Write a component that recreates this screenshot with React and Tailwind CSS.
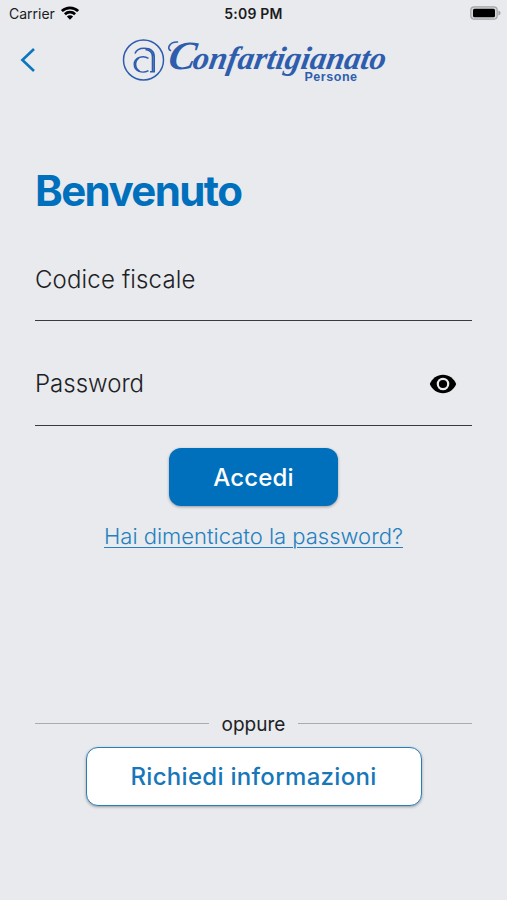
import { useState } from "react";

const StatusBar = () => (
  <div className="grid h-7 grid-cols-3 items-center text-sm text-[#1b1b1d]">
    <div className="flex items-center gap-1.5 pl-[9px]">
      <span>Carrier</span>
      <svg viewBox="0 0 18 14" className="-mt-0.5 h-3.5 w-[18px]" fill="none" stroke="#000" strokeWidth="2.7">
        <path d="M0.9 5.1 A11.6 11.6 0 0 1 17.1 5.1" />
        <path d="M3.9 8.3 A7.3 7.3 0 0 1 14.1 8.3" />
        <path d="M9 13.7 L5.9 10.6 A4.4 4.4 0 0 1 12.1 10.6 Z" fill="#000" stroke="none" />
      </svg>
    </div>
    <span className="text-center font-semibold tracking-[0.2px]">5:09 PM</span>
    <svg viewBox="0 0 31 14" className="mr-[6px] -mt-0.5 h-3.5 w-[31px] justify-self-end">
      <rect x="0.8" y="0.8" width="26.4" height="12.4" rx="3.5" fill="#d5d6d8" stroke="#a3a4a6" strokeWidth="1.2" />
      <rect x="3" y="2.7" width="22" height="8.6" rx="1.6" fill="#000" />
      <path d="M28.4 4.6 Q30.6 5.4 30.6 7 Q30.6 8.6 28.4 9.4 Z" fill="#a3a4a6" />
    </svg>
  </div>
);

const Logo = () => (
  <svg viewBox="0 0 270 48" className="h-12 w-[270px] overflow-visible" fill="#2f5dae" role="img" aria-label="Confartigianato Persone">
    <g fill="none" stroke="#2f5dae">
      <circle cx="22.5" cy="24" r="20" strokeWidth="1.5" />
      <path d="M14 17.5 C15.5 13.5 19 12.3 23 12.3 C29.5 12.3 33.2 15.5 33.2 21 V35.8 H29" strokeWidth="1.6" />
      <path d="M24.5 13.4 C29 14 31.6 16.5 31.6 21 V35.8" strokeWidth="1.8" />
      <path d="M27.5 22.3 C22 18.8 13.2 21.5 13.2 28.2 C13.2 35.5 21.5 38 27.5 34.6" strokeWidth="1.4" />
      <path d="M18 21.8 C13.2 25 13.2 32 18.5 35.2" strokeWidth="1.8" />
    </g>
    <g fontFamily="'Liberation Serif', serif" fontWeight="700" fontStyle="italic" transform="translate(0 32.6) skewX(-10)">
      <text x="46" y="0" fontSize="40" textLength="27" lengthAdjust="spacingAndGlyphs">C</text>
      <text x="70.5" y="0" fontSize="32.5" textLength="193" lengthAdjust="spacingAndGlyphs">onfartigianato</text>
    </g>
    <path d="M49.5 14.5 C45.5 13 48.5 5.5 56.500 6" fill="none" stroke="#2f5dae" strokeWidth="1.6" strokeLinecap="round" />
    <text x="183.5" y="44.5" fontSize="12.5" fontWeight="700" fontFamily="'Liberation Sans', sans-serif" textLength="52.5">Persone</text>
  </svg>
);

const EyeIcon = () => (
  <svg viewBox="0 0 28 20" className="h-5 w-7">
    <path d="M14 0.7 C8 0.7 3 4.5 0.8 10 C3 15.5 8 19.3 14 19.3 S25 15.5 27.2 10 C25 4.5 20 0.7 14 0.7 Z" fill="#000" />
    <circle cx="14" cy="10" r="5.2" fill="#000" stroke="#e8eaed" strokeWidth="2.2" />
  </svg>
);

const App = () => {
  const [showPassword, setShowPassword] = useState(false);

  return (
    <div className="flex h-screen flex-col overflow-hidden bg-[#e8eaed] font-['Inter',sans-serif] text-[#202124]">
      <StatusBar />

      <header className="grid h-16 grid-cols-[121px_270px_1fr] items-center">
        <button type="button" aria-label="Indietro" className="pl-5">
          <svg viewBox="0 0 16 26" className="h-[26px] w-4" fill="none" stroke="#0b76be" strokeWidth="2.6">
            <path d="M14 2 L2.4 13 L14 24" />
          </svg>
        </button>
        <Logo />
      </header>

      <main className="flex flex-col px-[35px] pt-[73px]">
        <h1 className="text-[42px] leading-[52px] font-bold tracking-[-1.6px] text-[#0070bd]">Benvenuto</h1>

        <div className="mt-9 flex h-[68px] items-start border-b border-[#3a3b3e] pt-[11px] text-2xl leading-8 font-light tracking-[0.15px]">
          <span>Codice fiscale</span>
        </div>

        <div className="mt-9 flex h-[69px] items-start justify-between border-b border-[#3a3b3e] pt-[11px] pr-[15px] text-2xl leading-8 font-light">
          <span>Password</span>
          <button type="button" aria-label="Mostra password" className="mt-1.5" onClick={() => setShowPassword(!showPassword)}>
            <EyeIcon />
          </button>
        </div>

        <button
          type="button"
          className="mt-[22px] h-[58px] w-[169px] self-center rounded-xl bg-[#0070bd] pt-0.5 text-2xl font-medium tracking-[0.2px] text-white shadow-[0_1px_3px_rgba(0,0,0,0.35)]"
        >
          Accedi
        </button>
        <a href="#" className="mt-3.5 self-center text-[22px] leading-8 font-light text-[#2580c0] underline decoration-1 underline-offset-3">
          Hai dimenticato la password?
        </a>

        <div className="mt-[155px] flex items-center gap-[13px] text-[19px] leading-7">
          <div className="h-px flex-1 bg-[#aaabae]" />
          <span className="pt-1">oppure</span>
          <div className="h-px flex-1 bg-[#aaabae]" />
        </div>

        <button
          type="button"
          className="mt-2 h-[59px] w-[336px] self-center rounded-xl border border-[#267fbd] bg-white text-2xl font-medium tracking-[0.3px] text-[#1677b9] shadow-[0_1px_3px_rgba(0,0,0,0.35)]"
        >
          Richiedi informazioni
        </button>
      </main>
    </div>
  );
};

export default App;
